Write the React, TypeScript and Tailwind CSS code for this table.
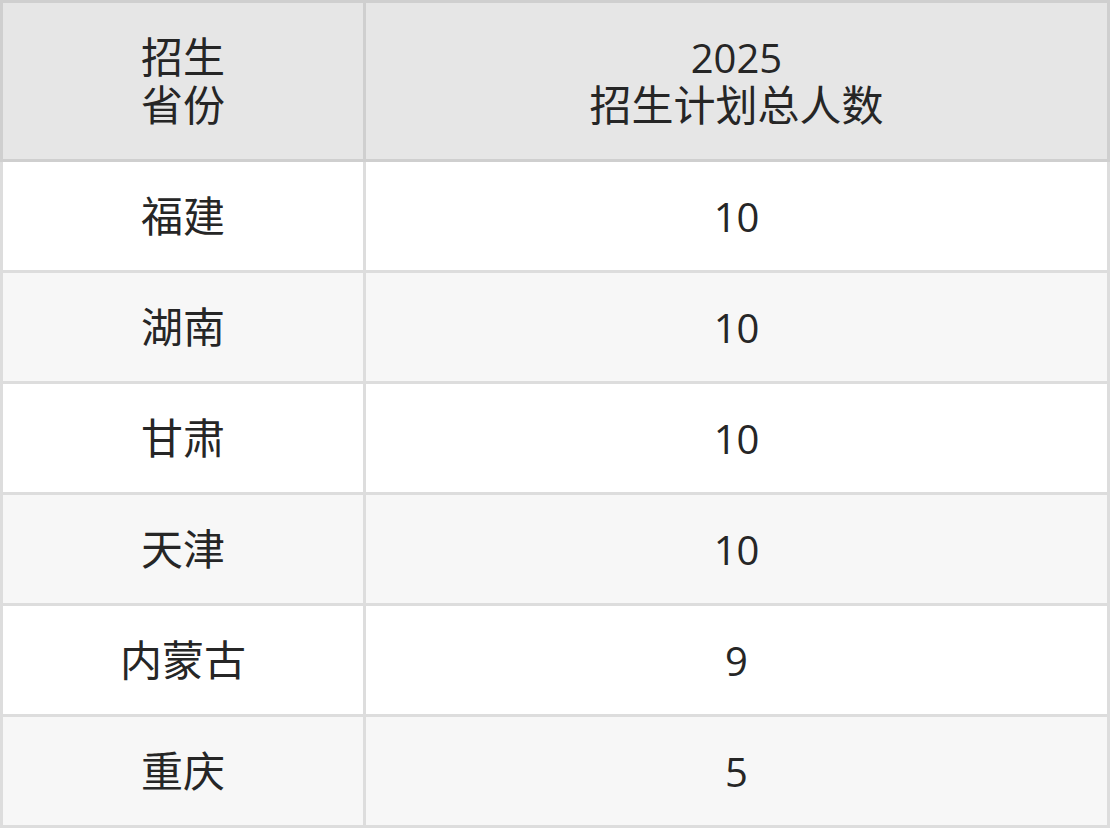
import React from "react";

interface PlanRow {
  province: string;
  total: number;
}

const rows: PlanRow[] = [
  { province: "福建", total: 10 },
  { province: "湖南", total: 10 },
  { province: "甘肃", total: 10 },
  { province: "天津", total: 10 },
  { province: "内蒙古", total: 9 },
  { province: "重庆", total: 5 },
];

// CJK glyphs sit a bit larger than the digits in the reference
const Cjk: React.FC<{ children: React.ReactNode }> = ({ children }) => (
  <span className="text-[42px]">{children}</span>
);

const App: React.FC = () => {
  return (
    <div
      className="w-[1110px] bg-white text-[#262626]"
      style={{ fontFamily: '"Open Sans", "Noto Sans CJK SC", sans-serif' }}
    >
      <table className="w-[1110px] table-fixed border-separate border-spacing-0 text-center text-[40px] leading-[47px]">
        <colgroup>
          <col className="w-[366px]" />
          <col className="w-[744px]" />
        </colgroup>
        <thead>
          <tr className="bg-[#e6e6e6]">
            <th className="h-[162px] border-[3px] border-[#cfcfcf] font-normal">
              <div>
                <Cjk>招生</Cjk>
              </div>
              <div>
                <Cjk>省份</Cjk>
              </div>
            </th>
            <th className="h-[162px] border-y-[3px] border-r-[3px] border-[#cfcfcf] font-normal">
              <div>2025</div>
              <div>
                <Cjk>招生计划总人数</Cjk>
              </div>
            </th>
          </tr>
        </thead>
        <tbody>
          {rows.map((row, i) => (
            <tr key={row.province} className={i % 2 === 1 ? "bg-[#f7f7f7]" : "bg-white"}>
              <td className="h-[111px] border-x-[3px] border-b-[3px] border-[#dddddd]">
                <Cjk>{row.province}</Cjk>
              </td>
              <td className="h-[111px] border-r-[3px] border-b-[3px] border-[#dddddd]">
                {row.total}
              </td>
            </tr>
          ))}
        </tbody>
      </table>
    </div>
  );
};

export default App;
